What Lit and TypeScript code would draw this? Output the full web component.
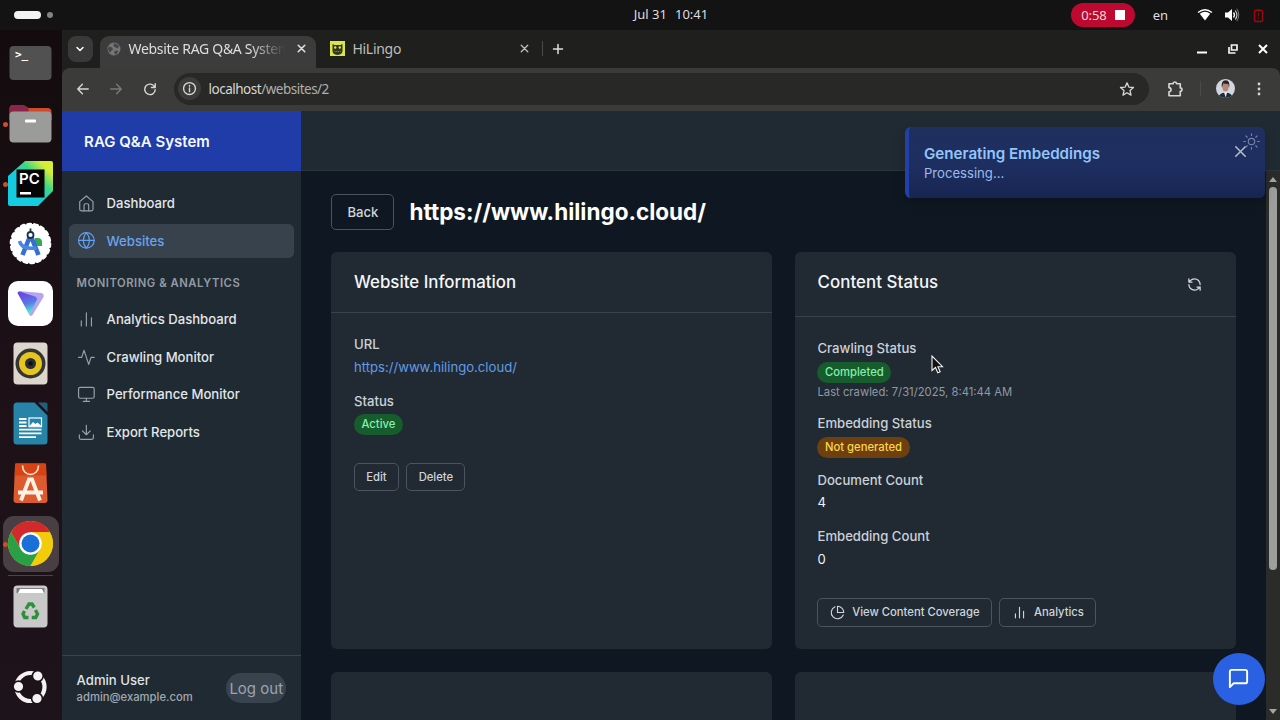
import { LitElement, html, css, svg, nothing } from "lit";
import { customElement, property } from "lit/decorators.js";
import { classMap } from "lit/directives/class-map.js";

const ICONS = {
  home: svg`<path d="M3.500 9.800L12 2.500l8.500 7.300V19.500a2 2 0 0 1-2 2h-13a2 2 0 0 1-2-2z"/><path d="M9 21.500v-7a2 2 0 0 1 2-2h2a2 2 0 0 1 2 2v7"/>`,
  globe: svg`<circle cx="12" cy="12" r="10"/><path d="M2 12h20M12 2a15.300 15.300 0 0 1 4 10 15.300 15.300 0 0 1-4 10 15.300 15.300 0 0 1-4-10 15.300 15.300 0 0 1 4-10z"/>`,
  bars: svg`<path d="M18.500 20.500V10M12 20.500V3.500M5.500 20.500V14"/>`,
  activity: svg`<path d="M22 12h-4l-3 9L9 3l-3 9H2"/>`,
  monitor: svg`<rect x="2" y="3" width="20" height="14" rx="2"/><path d="M8 21h8M12 17v4"/>`,
  download: svg`<path d="M21 15v4a2 2 0 0 1-2 2H5a2 2 0 0 1-2-2v-4M7 10l5 5 5-5M12 15V3"/>`,
  refresh: svg`<path d="M21 12a9 9 0 0 0-9-9 9.750 9.750 0 0 0-6.740 2.740L3 8M3 3v5h5M3 12a9 9 0 0 0 9 9 9.750 9.750 0 0 0 6.740-2.740L21 16M16 16h5v5"/>`,
  pie: svg`<path d="M21.210 15.890A10 10 0 1 1 8 2.830"/><path d="M22 12A10 10 0 0 0 12 2v10z"/>`,
  message: svg`<path d="M21 15a2 2 0 0 1-2 2H7l-4 4V5a2 2 0 0 1 2-2h14a2 2 0 0 1 2 2z"/>`,
  close: svg`<path d="M18 6L6 18M6 6l12 12"/>`,
  sun: svg`<circle cx="12" cy="12" r="4.500"/><path d="M12 1v2.500M12 20.500V23M4.200 4.200l1.800 1.800M18 18l1.800 1.800M1 12h2.500M20.500 12H23M4.200 19.800L6 18M18 6l1.800-1.800"/>`,
  chevron: svg`<path d="M6 9l6 6 6-6"/>`,
  back: svg`<path d="M21 12H4M11 4l-8 8 8 8"/>`,
  forward: svg`<path d="M3 12h17M13 4l8 8-8 8"/>`,
  reload: svg`<path d="M20 8.500A9 9 0 1 0 21 13M21 3v6.500h-6.500"/>`,
  info: svg`<circle cx="12" cy="12" r="9.500"/><path d="M12 11v6M12 7v1.200"/>`,
  star: svg`<path d="M12 2.800l2.800 6.300 6.900.700-5.200 4.600 1.500 6.700-6-3.500-6 3.500 1.500-6.700-5.200-4.600 6.900-.700z"/>`,
  puzzle: svg`<path d="M4 5h5.500a2.300 2.300 0 0 1 4.600 0H19v5.500a2.300 2.300 0 0 1 0 4.600V21H4v-5.200c3.600-.400 3.600-5.200 0-5.600z"/>`,
  plus: svg`<path d="M12 3v18M3 12h18"/>`,
};

type IconName = keyof typeof ICONS;

@customElement("line-icon")
export class LineIcon extends LitElement {
  @property() name: IconName = "home";
  @property({ type: Number }) size = 18.75;
  @property({ type: Number }) weight = 1.5;

  render() {
    return html`
      <svg
        width=${this.size}
        height=${this.size}
        viewBox="0 0 24 24"
        fill="none"
        stroke="currentColor"
        stroke-width=${this.weight}
        stroke-linecap="round"
        stroke-linejoin="round"
      >
        ${ICONS[this.name]}
      </svg>
    `;
  }

  static styles = css`
    :host {
      display: inline-flex;
      flex: none;
    }
    svg {
      display: block;
    }
  `;
}

@customElement("system-bar")
export class SystemBar extends LitElement {
  render() {
    return html`
      <div class="workspaces"><span class="pill"></span><span class="dot"></span></div>
      <div class="clock"><span>Jul 31</span><span>10:41</span></div>
      <div class="tray">
        <div class="recording">0:58<span class="stop"></span></div>
        <span class="lang">en</span>
        <svg class="wifi" width="16" height="14" viewBox="0 0 16 14">
          <path d="M1 4.500Q8-1 15 4.500" fill="none" stroke="#fff" stroke-width="1.300" />
          <path d="M2.800 5.700Q8 2 13.200 5.700L8 12.500z" fill="#fff" />
        </svg>
        <svg class="volume" width="16" height="14" viewBox="0 0 16 14">
          <path d="M1 4.500h3L8 1v12L4 9.500H1z" fill="#fff" />
          <path d="M9.500 4.500q2 2.500 0 5" fill="none" stroke="#fff" stroke-width="1.300" />
          <path d="M11.200 2.500q3.400 4.500 0 9" fill="none" stroke="#ccc" stroke-width="1.200" />
          <path d="M12.800.700q4 6.300 0 12.600" fill="none" stroke="#777" stroke-width="1" />
        </svg>
        <svg width="11" height="15" viewBox="0 0 11 15">
          <path d="M3.500 2h4M2.500 2.500h6q1 0 1 1v9q0 1-1 1h-6q-1 0-1-1v-9q0-1 1-1z" fill="none" stroke="#9c0710" stroke-width="1.400" />
          <path d="M5.500 5v3.500M5.500 10v1.300" stroke="#7c0a10" stroke-width="1.400" />
        </svg>
      </div>
    `;
  }

  static styles = css`
    :host {
      display: grid;
      grid-template-columns: 1fr auto 1fr;
      align-items: center;
      height: 30px;
      background: #131313;
      color: #dedede;
      font: 13px "Noto Sans", "Open Sans", sans-serif;
    }
    .workspaces {
      display: flex;
      align-items: center;
      gap: 6px;
      padding-left: 14px;
    }
    .pill {
      width: 27px;
      height: 8px;
      border-radius: 4px;
      background: #f3f3f3;
    }
    .dot {
      width: 6px;
      height: 6px;
      border-radius: 50%;
      background: #838383;
    }
    .clock {
      display: flex;
      gap: 8px;
      padding-left: 62px;
      padding-bottom: 2px;
    }
    .tray {
      display: flex;
      align-items: center;
      justify-content: flex-end;
      padding-right: 16px;
    }
    .recording {
      display: flex;
      align-items: center;
      justify-content: center;
      gap: 8px;
      width: 63.5px;
      height: 24.5px;
      border-radius: 13px;
      background: #bd0830;
      color: #f4d9d3;
      letter-spacing: -0.1px;
    }
    .stop {
      width: 10px;
      height: 10px;
      background: #fff;
    }
    .lang {
      margin: 0 29px 0 18px;
    }
    .volume {
      margin: 0 13px 0 11px;
    }
  `;
}

const chromeArt = svg`
  <circle cx="22.500" cy="22.500" r="22.500" fill="#f2cb0b"/>
  <path d="M3 11.300A22.500 22.500 0 0 1 42 11.300H22.500L12.800 28.100z" fill="#d22a2c"/>
  <path d="M3 11.300A22.500 22.500 0 0 0 22.500 45L32.200 28.100 12.800 28.100z" fill="#2aa046"/>
  <path d="M22.500 11.300H42A22.500 22.500 0 0 1 22.500 45L32.200 28.100z" fill="#f2cb0b"/>
  <circle cx="22.500" cy="22.500" r="11.300" fill="#fff"/>
  <circle cx="22.500" cy="22.500" r="9" fill="#1b6fd8"/>`;

// each icon is drawn on a 45x45 canvas
const DOCK_APPS = [
  {
    art: svg`
      <rect x="1.500" y="5" width="42" height="34" rx="4" fill="#515151"/>
      <text x="7" y="17" fill="#fff" font-family="DejaVu Sans Mono, monospace" font-size="11" font-weight="700">&gt;_</text>`,
  },
  {
    running: true,
    art: svg`
      <path d="M1.500 8a4 4 0 0 1 4-4h10l5 3h19a4 4 0 0 1 4 4v8h-42z" fill="#d14b2b"/>
      <path d="M1.500 8a4 4 0 0 1 4-4h10l5 3v8h-19z" fill="#8b2649"/>
      <rect x="1.500" y="10.500" width="42" height="31" rx="4" fill="#9b9b99"/>
      <rect x="17" y="18.500" width="11" height="3" rx="1" fill="#fff"/>`,
  },
  {
    running: true,
    art: svg`
      <defs><linearGradient id="pc" x1="0" y1="1" x2="1" y2="0">
        <stop offset="0.400" stop-color="#15cbe0"/><stop offset="0.650" stop-color="#3ed786"/><stop offset="0.850" stop-color="#d6ee37"/>
      </linearGradient></defs>
      <path d="M17 0h26a2 2 0 0 1 2 2v28L30 45H2a2 2 0 0 1-2-2V15z" fill="url(#pc)"/>
      <rect x="8.500" y="8.500" width="28" height="28" fill="#050505"/>
      <text x="11" y="23" fill="#fff" font-family="Inter, sans-serif" font-size="15" font-weight="600">PC</text>
      <rect x="12" y="31" width="11" height="2.500" fill="#fff"/>`,
  },
  {
    art: svg`
      <circle cx="22.500" cy="22.500" r="19.700" fill="#fff"/>
      <circle cx="22.500" cy="22.500" r="19.300" fill="none" stroke="#fff" stroke-width="3" stroke-dasharray="3 3.740" stroke-linecap="round"/>
      <path d="M27 17h4q3 1 3 4v4h-7z" fill="#35a853"/>
      <path d="M22.500 14L14.500 34M22.500 14l8 20" stroke="#346fd1" stroke-width="4.600" fill="none"/>
      <path d="M11.500 20q2 9 17 7" stroke="#4a87e4" stroke-width="3.500" fill="none"/>
      <circle cx="22.500" cy="14" r="3" fill="#fff" stroke="#1c3248" stroke-width="1.800"/>
      <path d="M22.500 7.500v4" stroke="#1c3248" stroke-width="1.800"/>`,
  },
  {
    art: svg`
      <defs><linearGradient id="vpn" x1="0" y1="0" x2="0.300" y2="1">
        <stop offset="0.150" stop-color="#6a48df"/><stop offset="0.600" stop-color="#5a78e5"/><stop offset="1" stop-color="#50ead0"/>
      </linearGradient></defs>
      <rect width="45" height="45" rx="10" fill="#fff"/>
      <path d="M11 10l22.500 2q3 1 2 4L24.500 34q-2 2-3 0z" fill="#b7a3f1"/>
      <path d="M10 13q-1.500-2.500 1.500-2.500L27 15.500q3 1 1.500 4L21.500 34z" fill="url(#vpn)"/>`,
  },
  {
    art: svg`
      <rect x="5.500" y="1.500" width="34" height="42" rx="4" fill="#dcd6cd"/>
      <circle cx="22.500" cy="22.500" r="15" fill="#353535"/>
      <circle cx="22.500" cy="22.500" r="11.500" fill="#e6c51e"/>
      <circle cx="22.500" cy="22.500" r="5.500" fill="#2d3032"/>
      <circle cx="22.500" cy="22.500" r="2.300" fill="#111"/>`,
  },
  {
    art: svg`
      <path d="M9 1.500h17.500l13 13V40a3.500 3.500 0 0 1-3.500 3.500H9A3.500 3.500 0 0 1 5.500 40V5A3.500 3.500 0 0 1 9 1.500z" fill="#2584a8"/>
      <path d="M30 1.500h8q1.500 0 1.500 1.500v8z" fill="#20607a"/>
      <path d="M11 18h7.500M11 21.500h7.500M11 25h7.500M11 28.700h22.500M11 32.400h22.500M11 36.100h17" stroke="#fff" stroke-width="1.800"/>
      <rect x="21" y="17" width="12.500" height="8.700" fill="#2584a8" stroke="#fff" stroke-width="1.200"/>
      <path d="M21.500 25l3.500-4 2.500 2 2-1.500 4 3.500z" fill="#fff"/>`,
  },
  {
    art: svg`
      <path d="M8.500 2.500h28q1.500 0 1.600 1.500l1.400 35q0 3-3 3h-28q-3 0-3-3L7 4q.100-1.500 1.500-1.500z" fill="#dd5a2f"/>
      <path d="M7.200 2.500h30.600l.500 12H6.700z" fill="#d84316"/>
      <path d="M14.500 4.500c0 12 16 12 16 0" fill="none" stroke="#ffe3cf" stroke-width="1.600"/>
      <path d="M13 39.500L21 18.500h3l8 21M10 31.500h25" fill="none" stroke="#fff1e3" stroke-width="3.800"/>`,
  },
  { running: true, active: true, art: chromeArt },
];

const trashArt = svg`
  <rect x="5.500" y="1.500" width="34" height="42" rx="4" fill="#c9c9c9"/>
  <path d="M8.500 4h28v5h-28z" fill="#7d7d7d"/>
  <path d="M10 9l2-4h22l2 4z" fill="#fff"/>
  <g fill="none" stroke="#2f8f3a" stroke-width="3.400">
    <path d="M18 25l3-5h3l2.300 3.500"/><path d="M27.500 26l2 4-1.800 3.500h-4"/><path d="M20.500 33.500h-3.800l-1.700-3.500 1.500-3"/>
  </g>`;

const ubuntuArt = svg`
  <circle cx="22.500" cy="22" r="14" fill="none" stroke="#f6f2f4" stroke-width="4.200"/>
  <g fill="#f6f2f4" stroke="#1c1319" stroke-width="1.600">
    <circle cx="10.500" cy="21.500" r="5.400"/><circle cx="29.800" cy="11" r="5.400"/><circle cx="29" cy="33.500" r="5.400"/>
  </g>`;

@customElement("app-dock")
export class AppDock extends LitElement {
  _slot(app: { art: unknown; running?: boolean; active?: boolean }) {
    return html`
      <div class=${classMap({ slot: true, active: !!app.active })}>
        ${app.running ? html`<span class="running"></span>` : nothing}
        <svg width="45" height="45" viewBox="0 0 45 45">${app.art}</svg>
      </div>
    `;
  }

  render() {
    return html`
      ${DOCK_APPS.map((app) => this._slot(app))}
      <hr />
      ${this._slot({ art: trashArt })}
      <div class="spacer"></div>
      ${this._slot({ art: ubuntuArt })}
    `;
  }

  static styles = css`
    :host {
      display: flex;
      flex-direction: column;
      align-items: center;
      gap: 4px;
      flex: none;
      width: 61.6px;
      padding: 5.5px 0 5px;
      box-sizing: border-box;
      background: linear-gradient(#130b0e, #1d1117 50%, #1d131a);
    }
    .slot {
      position: relative;
      display: flex;
      flex: none;
      align-items: center;
      justify-content: center;
      width: 56px;
      height: 56px;
      border-radius: 11px;
    }
    .active {
      background: #483e43;
    }
    .running {
      position: absolute;
      left: 0;
      top: 26px;
      width: 5px;
      height: 5px;
      border-radius: 50%;
      background: #c9502c;
    }
    hr {
      width: 45px;
      height: 1px;
      margin: -1px 0 -1px;
      border: 0;
      background: #4a4246;
    }
    .spacer {
      flex: 1;
    }
  `;
}

@customElement("browser-chrome")
export class BrowserChrome extends LitElement {
  render() {
    return html`
      <div class="tabs">
        <div class="tab-search"><line-icon name="chevron" size="12" weight="3"></line-icon></div>
        <div class="tab selected">
          <svg width="14" height="14" viewBox="0 0 14 14">
            <circle cx="7" cy="7" r="6.500" fill="#747677" />
            <path d="M2 4.500l3 1 1 2-2 1.500-1 2L.800 7zM7 1l5 2.500-1 3-2.500-1-2-1.500zM8 8.500l3.500.500-2.500 4L7 11z" fill="#454647" />
          </svg>
          <span class="title">Website RAG Q&amp;A System</span>
          <line-icon name="close" size="13" weight="3"></line-icon>
        </div>
        <div class="tab">
          <svg width="15" height="15" viewBox="0 0 15 15">
            <rect width="15" height="15" fill="#dce648" />
            <path d="M2.500 3l2 1h6l2-1v7q0 3.500-5 4-5-.500-5-4z" fill="#33371c" />
            <circle cx="5.200" cy="6.500" r="1.200" fill="#dce648" />
            <circle cx="9.800" cy="6.500" r="1.200" fill="#dce648" />
            <path d="M4.500 10.500h6" stroke="#8f9638" stroke-width="1" stroke-dasharray="1 .8" />
          </svg>
          <span class="title">HiLingo</span>
          <line-icon name="close" size="13" weight="2.5"></line-icon>
        </div>
        <span class="divider"></span>
        <line-icon class="new-tab" name="plus" size="12" weight="3"></line-icon>
        <div class="window">
          <svg width="10" height="12" viewBox="0 0 10 12"><path d="M0 9.500h10" stroke="#fff" stroke-width="2" /></svg>
          <svg width="10" height="10" viewBox="0 0 10 10">
            <path d="M3.500 1h5.500v5h-5.500zM1 3v6h6.500" fill="none" stroke="#f2f2f2" stroke-width="1.700" />
          </svg>
          <svg width="10" height="10" viewBox="0 0 10 10"><path d="M1 1l8 8M9 1L1 9" stroke="#fff" stroke-width="2" /></svg>
        </div>
      </div>
      <div class="toolbar">
        <line-icon class="nav" name="back" size="14" weight="2.4"></line-icon>
        <line-icon class="nav dim" name="forward" size="14" weight="2.4"></line-icon>
        <line-icon class="nav" name="reload" size="14" weight="2.4"></line-icon>
        <div class="address">
          <span class="site"><line-icon name="info" size="15" weight="2.2"></line-icon></span>
          <span class="url">localhost<span class="path">/websites/2</span></span>
          <line-icon name="star" size="16" weight="2"></line-icon>
        </div>
        <line-icon class="puzzle" name="puzzle" size="18" weight="2.2"></line-icon>
        <span class="divider"></span>
        <svg class="avatar" width="19" height="19" viewBox="0 0 19 19">
          <defs><clipPath id="round"><circle cx="9.500" cy="9.500" r="9.500" /></clipPath></defs>
          <g clip-path="url(#round)">
            <rect width="19" height="19" fill="#d3d6de" />
            <path d="M2.500 19q0-5 7-5.500 7 .500 7 5.500z" fill="#1e2a3d" />
            <path d="M7.800 12.500h3.600l-1.700 6z" fill="#e6e8ee" />
            <ellipse cx="9.500" cy="8" rx="3" ry="4.600" fill="#b98672" />
            <path d="M6 9Q4.600 1.300 9.800 1.300 14.400 1.500 13 9l-.800-4-5-.500z" fill="#2a2225" />
          </g>
        </svg>
        <svg width="4" height="14" viewBox="0 0 4 14" fill="#d4d4d2">
          <circle cx="2" cy="2" r="1.400" /><circle cx="2" cy="7" r="1.400" /><circle cx="2" cy="12" r="1.400" />
        </svg>
      </div>
    `;
  }

  static styles = css`
    :host {
      display: block;
      flex: none;
      background: #1f201e;
      color: #d6d6d4;
      font: 14px "Noto Sans", "Open Sans", sans-serif;
    }
    .tabs {
      display: flex;
      align-items: center;
      height: 37.5px;
      padding-left: 6.4px;
    }
    .tab-search {
      display: flex;
      align-items: center;
      justify-content: center;
      width: 25px;
      height: 26px;
      margin-right: 7px;
      border-radius: 8px;
      background: #393939;
      color: #fff;
    }
    .tab {
      display: flex;
      align-items: center;
      width: 216px;
      height: 31.5px;
      margin-top: 6px;
      padding: 0 8px 6px 7px;
      box-sizing: border-box;
      border-radius: 9px 9px 0 0;
      color: #bdbdbb;
    }
    .tab + .tab {
      width: 223px;
      padding: 0 8px 6px 14px;
    }
    .selected {
      background: #3c3c3c;
      color: #dededc;
    }
    .title {
      flex: 1;
      margin: 0 10px 0 7.5px;
      overflow: hidden;
      white-space: nowrap;
      letter-spacing: -0.3px;
    }
    .selected .title {
      mask-image: linear-gradient(to right, #000 78%, transparent);
    }
    .divider {
      width: 1px;
      height: 15px;
      background: #4b4c4a;
    }
    .tabs .divider {
      margin: 0 9px 0 3px;
    }
    .new-tab {
      color: #e0e0de;
    }
    .window {
      display: flex;
      align-items: center;
      gap: 20.5px;
      margin-left: auto;
      padding-right: 12px;
    }
    .toolbar {
      display: flex;
      align-items: center;
      height: 43.75px;
      padding: 0 19px 1.5px 14px;
      box-sizing: border-box;
      border-radius: 8px 8px 0 0;
      background: #3b3c3a;
    }
    .nav {
      margin-right: 19.5px;
    }
    .dim {
      color: #797a78;
    }
    .address {
      display: flex;
      align-items: center;
      flex: 1;
      height: 32px;
      margin-left: -2px;
      margin-right: 17px;
      padding: 0 14px 0 4px;
      border-radius: 16px;
      background: #282826;
    }
    .site {
      display: flex;
      align-items: center;
      justify-content: center;
      width: 23px;
      height: 23px;
      border-radius: 50%;
      background: #3b3b39;
    }
    .url {
      flex: 1;
      margin-left: 7.5px;
      font-size: 13.5px;
      letter-spacing: -0.5px;
    }
    .path {
      color: #b0b0ae;
    }
    .puzzle {
      margin-right: 16px;
    }
    .avatar {
      margin: 0 22px 0 15px;
    }
  `;
}

const MAIN_LINKS: { icon: IconName; label: string; active?: boolean }[] = [
  { icon: "home", label: "Dashboard" },
  { icon: "globe", label: "Websites", active: true },
];

const MONITORING_LINKS: typeof MAIN_LINKS = [
  { icon: "bars", label: "Analytics Dashboard" },
  { icon: "activity", label: "Crawling Monitor" },
  { icon: "monitor", label: "Performance Monitor" },
  { icon: "download", label: "Export Reports" },
];

@customElement("side-nav")
export class SideNav extends LitElement {
  _link(item: (typeof MAIN_LINKS)[number]) {
    return html`
      <a class=${classMap({ link: true, active: !!item.active })}>
        <line-icon .name=${item.icon}></line-icon>${item.label}
      </a>
    `;
  }

  render() {
    return html`
      <div class="brand">RAG Q&amp;A System</div>
      <nav>
        ${MAIN_LINKS.map((item) => this._link(item))}
        <h3>Monitoring &amp; Analytics</h3>
        ${MONITORING_LINKS.map((item) => this._link(item))}
      </nav>
      <div class="user">
        <div>
          <div class="name">Admin User</div>
          <div class="email">admin@example.com</div>
        </div>
        <button>Log out</button>
      </div>
    `;
  }

  static styles = css`
    :host {
      display: flex;
      flex-direction: column;
      flex: none;
      width: 239.9px;
      background: #202a32;
    }
    .brand {
      display: flex;
      align-items: center;
      height: 60px;
      padding-left: 22.5px;
      background: #1f3ca8;
      color: #f5f8ff;
      font-size: 15px;
      font-weight: 600;
    }
    nav {
      display: flex;
      flex-direction: column;
      flex: 1;
      gap: 3.75px;
      padding: 15px 7.5px;
    }
    .link {
      display: flex;
      align-items: center;
      gap: 11.25px;
      height: 33.75px;
      padding: 0 7.5px;
      border-radius: 5.6px;
      color: #e2e6ea;
      font-weight: 500;
    }
    .link line-icon {
      color: #98a1ab;
    }
    .active {
      background: #38424d;
      color: #6aa3ee;
    }
    .active line-icon {
      color: #60a0f5;
    }
    h3 {
      margin: 15px 7.5px 7.5px;
      color: #929ba5;
      font-size: 11.25px;
      font-weight: 600;
      line-height: 15px;
      letter-spacing: 0.54px;
      text-transform: uppercase;
    }
    .user {
      display: flex;
      align-items: center;
      justify-content: space-between;
      height: 64px;
      padding: 0 15px;
      border-top: 1px solid #39444d;
    }
    .name {
      color: #dfe3e7;
      font-weight: 500;
      line-height: 18.75px;
    }
    .email {
      color: #a0a8b1;
      font-size: 11.25px;
      font-weight: 500;
      line-height: 15px;
    }
    button {
      width: 60.5px;
      height: 30px;
      padding: 0;
      border: 0;
      border-radius: 15px;
      background: #39434e;
      color: #9aa3ae;
      font: inherit;
      font-size: 15px;
      white-space: nowrap;
    }
  `;
}

@customElement("website-page")
export class WebsitePage extends LitElement {
  render() {
    return html`
      <div class="heading">
        <button class="back">Back</button>
        <h1>https://www.hilingo.cloud/</h1>
      </div>
      <div class="cards">
        <section>
          <header><h2>Website Information</h2></header>
          <div class="body">
            <dl>
              <dt>URL</dt>
              <dd class="href">https://www.hilingo.cloud/</dd>
              <dt>Status</dt>
              <dd><span class="badge green">Active</span></dd>
            </dl>
            <div class="actions">
              <button>Edit</button>
              <button>Delete</button>
            </div>
          </div>
        </section>
        <section>
          <header class="tall">
            <h2>Content Status</h2>
            <line-icon name="refresh" size="15" weight="2"></line-icon>
          </header>
          <div class="body">
            <dl>
              <dt>Crawling Status</dt>
              <dd><span class="badge green">Completed</span></dd>
              <dd class="note">Last crawled: 7/31/2025, 8:41:44 AM</dd>
              <dt>Embedding Status</dt>
              <dd><span class="badge amber">Not generated</span></dd>
              <dt>Document Count</dt>
              <dd>4</dd>
              <dt>Embedding Count</dt>
              <dd>0</dd>
            </dl>
            <div class="actions">
              <button><line-icon name="pie" size="15" weight="1.8"></line-icon>View Content Coverage</button>
              <button><line-icon name="bars" size="15" weight="1.8"></line-icon>Analytics</button>
            </div>
          </div>
        </section>
        <section class="next"></section>
        <section class="next"></section>
      </div>
    `;
  }

  static styles = css`
    :host {
      display: block;
      flex: 1;
      padding: 22.5px 30px 0;
      background: #0f1822;
      overflow: hidden;
    }
    .heading {
      display: flex;
      align-items: center;
      gap: 15px;
      margin-bottom: 22.5px;
    }
    h1 {
      margin: 0;
      color: #fff;
      font-size: 22.5px;
      font-weight: 700;
      line-height: 30px;
    }
    button {
      display: inline-flex;
      align-items: center;
      justify-content: center;
      gap: 7.5px;
      height: 28.5px;
      padding: 0 11.25px;
      box-sizing: border-box;
      border: 1px solid #4a545e;
      border-radius: 5px;
      background: none;
      color: #ced4da;
      font: inherit;
      font-size: 11.25px;
      font-weight: 500;
    }
    .back {
      height: 36px;
      padding: 0 15px;
      font-size: 13.125px;
    }
    .cards {
      display: grid;
      grid-template-columns: 1fr 1fr;
      gap: 22.5px;
    }
    section {
      border-radius: 6px;
      background: #212a32;
    }
    .next {
      height: 200px;
    }
    header {
      display: flex;
      align-items: center;
      justify-content: space-between;
      height: 60.5px;
      padding: 0 34px 0 22.5px;
      box-sizing: border-box;
      border-bottom: 1px solid #37424b;
      color: #d4d9de;
    }
    .tall {
      height: 64.5px;
    }
    h2 {
      margin: 0;
      color: #f4f6f8;
      font-size: 16.875px;
      font-weight: 500;
      line-height: 26px;
    }
    .tall h2 {
      padding-bottom: 4px;
      letter-spacing: 0.07px;
    }
    .body {
      padding: 22.5px;
    }
    dl {
      margin: 0 0 30px;
    }
    dt {
      color: #cbd1d8;
      font-weight: 500;
      line-height: 18.75px;
    }
    dd {
      display: flex;
      align-items: center;
      height: 18.75px;
      margin: 3.75px 0 0;
      color: #f0f2f4;
    }
    dd + dt {
      margin-top: 15px;
    }
    .href {
      color: #629be6;
    }
    .note {
      height: 15px;
      color: #9099a4;
      font-size: 11.25px;
    }
    .badge {
      flex: none;
      margin-top: 2px;
      padding: 0 7.5px;
      border-radius: 11px;
      font-size: 11.25px;
      font-weight: 500;
      line-height: 21px;
    }
    .green {
      background: #175c2c;
      color: #86efac;
    }
    .amber {
      background: #6f400f;
      color: #fbd54a;
    }
    .actions {
      display: flex;
      gap: 7.5px;
    }
  `;
}

@customElement("toast-message")
export class ToastMessage extends LitElement {
  @property() heading = "";

  render() {
    return html`
      <div class="text">
        <strong>${this.heading}</strong>
        <slot></slot>
      </div>
      <line-icon class="close" name="close" size="19" weight="2"></line-icon>
      <line-icon class="theme" name="sun" size="17" weight="1.6"></line-icon>
    `;
  }

  static styles = css`
    :host {
      display: flex;
      width: 360px;
      height: 70.5px;
      padding: 15px;
      box-sizing: border-box;
      border-left: 4px solid #2340a8;
      border-radius: 6px;
      background: linear-gradient(#1f305f, #1d2e60 55%, #172552);
      color: #9bbbea;
      box-shadow: 0 6px 12px #0003;
    }
    .text {
      flex: 1;
      line-height: 18.75px;
    }
    strong {
      display: block;
      padding-top: 1px;
      color: #93c5fd;
      font-size: 15.15px;
      font-weight: 600;
      line-height: 21px;
    }
    .close {
      position: absolute;
      right: 15px;
      top: 15px;
      color: #b2bbca;
    }
    .theme {
      position: absolute;
      right: 5px;
      top: 6px;
      color: #7282a7;
    }
  `;
}

@customElement("app-root")
export class AppRoot extends LitElement {
  render() {
    return html`
      <system-bar></system-bar>
      <div class="desktop">
        <app-dock></app-dock>
        <div class="browser">
          <browser-chrome></browser-chrome>
          <div class="page">
            <side-nav></side-nav>
            <div class="content">
              <div class="topbar"></div>
              <div class="scroller">
                <website-page></website-page>
                <div class="scrollbar">
                  <span class="arrow up"></span>
                  <span class="thumb"></span>
                  <span class="arrow down"></span>
                </div>
              </div>
            </div>
          </div>
        </div>
      </div>
      <toast-message class="toast" heading="Generating Embeddings">Processing...</toast-message>
      <div class="chat"><line-icon name="message" size="23" weight="2"></line-icon></div>
      <svg class="cursor" width="13" height="20" viewBox="0 0 13 20">
        <path d="M1 1v14.500l3.500-3 2.300 5.200 2.400-1-2.300-5h4.600z" fill="#111" stroke="#f2f2f2" stroke-width="1.100" />
      </svg>
    `;
  }

  static styles = css`
    :host {
      position: relative;
      display: flex;
      flex-direction: column;
      width: 1280px;
      height: 720px;
      overflow: hidden;
      font: 13.125px Inter, sans-serif;
    }
    .desktop {
      display: flex;
      flex: 1;
      min-height: 0;
    }
    .browser,
    .content {
      display: flex;
      flex-direction: column;
      flex: 1;
      min-width: 0;
      min-height: 0;
    }
    .page,
    .scroller {
      display: flex;
      flex: 1;
      min-height: 0;
    }
    .topbar {
      height: 60px;
      box-sizing: border-box;
      border-bottom: 1px solid #2c363f;
      background: #202a32;
    }
    .scrollbar {
      display: flex;
      flex-direction: column;
      align-items: center;
      width: 14px;
      padding: 6px 0 6px;
      box-sizing: border-box;
      background: #2b2c2a;
    }
    .thumb {
      width: 8px;
      height: 383px;
      margin-top: 5px;
      border-radius: 4px;
      background: #9d9f9d;
    }
    .arrow {
      border: 4px solid transparent;
    }
    .up {
      border-top: 0;
      border-bottom: 5px solid #a3a5a3;
    }
    .down {
      margin-top: auto;
      border-bottom: 0;
      border-top: 5px solid #a3a5a3;
    }
    .toast {
      position: absolute;
      left: 905px;
      top: 127px;
    }
    .chat {
      position: absolute;
      right: 15px;
      bottom: 15px;
      display: flex;
      align-items: center;
      justify-content: center;
      width: 52.5px;
      height: 52.5px;
      border-radius: 50%;
      background: #2a60e2;
      color: #fff;
    }
    .cursor {
      position: absolute;
      left: 931px;
      top: 355px;
    }
  `;
}
